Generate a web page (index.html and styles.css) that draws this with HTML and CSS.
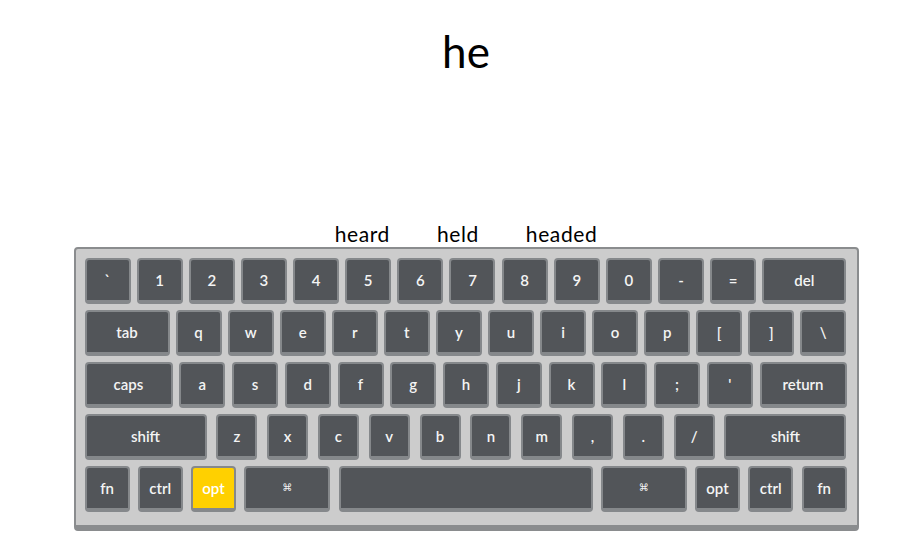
FILE: index.html
```html
<!DOCTYPE html>
<html>
<head>
<meta charset="utf-8">
<link rel="stylesheet" href="styles.css">
</head>
<body>
<div class="app">
  <h1 class="title">he</h1>
  <div class="suggestions">
    <span class="suggestion">heard</span>
    <span class="suggestion">held</span>
    <span class="suggestion">headed</span>
  </div>
  <div class="keyboard">
    <div class="row row-1">
      <div class="key">`</div><div class="key">1</div><div class="key">2</div><div class="key">3</div><div class="key">4</div><div class="key">5</div><div class="key">6</div><div class="key">7</div><div class="key">8</div><div class="key">9</div><div class="key">0</div><div class="key">-</div><div class="key">=</div><div class="key key-del">del</div>
    </div>
    <div class="row row-2">
      <div class="key key-tab">tab</div><div class="key">q</div><div class="key">w</div><div class="key">e</div><div class="key">r</div><div class="key">t</div><div class="key">y</div><div class="key">u</div><div class="key">i</div><div class="key">o</div><div class="key">p</div><div class="key">[</div><div class="key">]</div><div class="key">\</div>
    </div>
    <div class="row row-3">
      <div class="key key-caps">caps</div><div class="key">a</div><div class="key">s</div><div class="key">d</div><div class="key">f</div><div class="key">g</div><div class="key">h</div><div class="key">j</div><div class="key">k</div><div class="key">l</div><div class="key">;</div><div class="key">'</div><div class="key key-return">return</div>
    </div>
    <div class="row row-4">
      <div class="key key-shift">shift</div><div class="key">z</div><div class="key">x</div><div class="key">c</div><div class="key">v</div><div class="key">b</div><div class="key">n</div><div class="key">m</div><div class="key">,</div><div class="key">.</div><div class="key">/</div><div class="key key-shift">shift</div>
    </div>
    <div class="row row-5">
      <div class="key">fn</div><div class="key">ctrl</div><div class="key key-active">opt</div><div class="key key-cmd"><span class="cmd">⌘</span></div><div class="key key-space"></div><div class="key key-cmd"><span class="cmd">⌘</span></div><div class="key">opt</div><div class="key">ctrl</div><div class="key">fn</div>
    </div>
  </div>
</div>
</body>
</html>
```
FILE: styles.css
```css
html, body {
  margin: 0;
  padding: 0;
  background: #ffffff;
}

body {
  font-family: "Lato", "Noto Sans", "DejaVu Sans", sans-serif;
  color: #000;
}

.app {
  padding-left: 9px;
  display: flex;
  flex-direction: column;
  align-items: center;
}

.title {
  margin: 25px 0 0;
  font-size: 44px;
  line-height: 52px;
  font-weight: 400;
  height: 52px;
}

.suggestions {
  margin-top: 145px;
  display: flex;
  gap: 47px;
  font-size: 21px;
  letter-spacing: 0.6px;
  line-height: 24px;
  height: 24px;
}

.keyboard {
  margin-top: 1px;
  width: 762px;
  padding: 9px 10px 13px 9px;
  background: #cccccc;
  border: 2px solid #8a8c8e;
  border-bottom-width: 6px;
  border-radius: 4px;
  display: flex;
  flex-direction: column;
  gap: 6px;
}

.row {
  display: flex;
  justify-content: space-between;
}

.key {
  box-sizing: border-box;
  width: 46px;
  height: 46px;
  flex: none;
  background: #525559;
  border: 2px solid #85888b;
  border-bottom-width: 4px;
  border-radius: 4px;
  color: #f4f4f4;
  font-size: 15px;
  font-weight: 600;
  display: flex;
  align-items: center;
  justify-content: center;
  padding-bottom: 1px;
}

.key-del { width: 84px; }
.key-tab { width: 85px; }
.key-caps { width: 88px; }
.key-return { width: 87px; }

.row-4 .key { width: 41px; }
.row-4 .key-shift { width: 122px; }

.row-5 .key { width: 45px; }
.row-5 .key-cmd { width: 86px; }
.row-5 .key-space { width: 254px; }

.key-active {
  background: #ffd000;
  color: #ffffff;
}

.cmd {
  font-family: "DejaVu Sans", sans-serif;
  font-size: 10px;
  font-weight: 400;
}
```
